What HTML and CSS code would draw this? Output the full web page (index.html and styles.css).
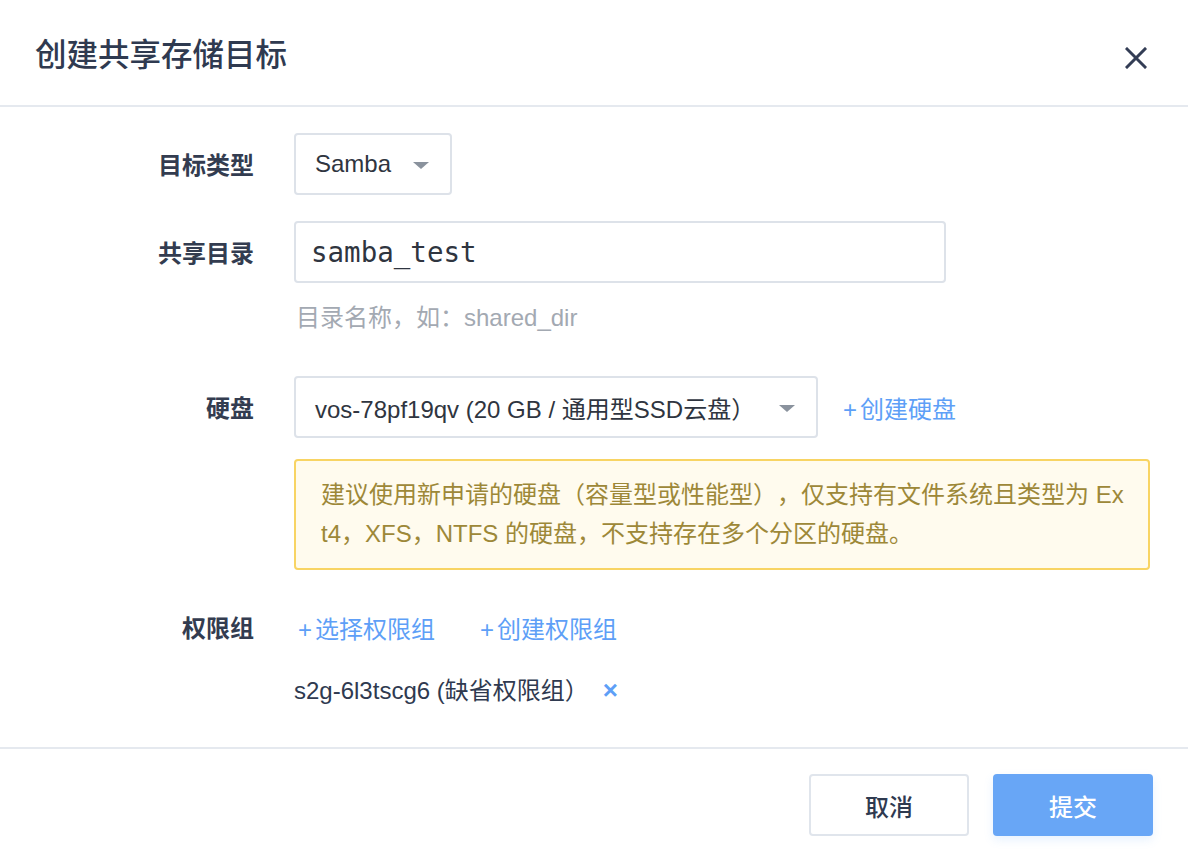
FILE: index.html
```html
<!DOCTYPE html>
<html lang="zh-CN">
<head>
<meta charset="utf-8">
<title>创建共享存储目标</title>
<link rel="stylesheet" href="styles.css">
</head>
<body>
<div class="dialog">
  <div class="header">
    <h1 class="title">创建共享存储目标</h1>
    <button class="close" aria-label="关闭">
      <svg width="22" height="22" viewBox="0 0 22 22"><path d="M2 2L20 20M20 2L2 20" stroke="#333d55" stroke-width="3" stroke-linecap="square" fill="none"/></svg>
    </button>
  </div>
  <div class="body">
    <div class="row row-type">
      <div class="label">目标类型</div>
      <div class="field">
        <div class="select select-type"><span>Samba</span><i class="caret"></i></div>
      </div>
    </div>
    <div class="row row-dir">
      <div class="label">共享目录</div>
      <div class="field">
        <div class="input">samba_test</div>
        <div class="help">目录名称，如：shared_dir</div>
      </div>
    </div>
    <div class="row row-disk">
      <div class="label">硬盘</div>
      <div class="field">
        <div class="inline">
          <div class="select select-disk"><span>vos-78pf19qv (20 GB / 通用型SSD云盘）</span><i class="caret"></i></div>
          <a class="link"><span class="plus">+</span>创建硬盘</a>
        </div>
        <div class="warn">建议使用新申请的硬盘（容量型或性能型），仅支持有文件系统且类型为 Ex<br>t4，XFS，NTFS 的硬盘，不支持存在多个分区的硬盘。</div>
      </div>
    </div>
    <div class="row row-perm">
      <div class="label">权限组</div>
      <div class="field">
        <div class="links">
          <a class="link"><span class="plus">+</span>选择权限组</a>
          <a class="link"><span class="plus">+</span>创建权限组</a>
        </div>
        <div class="tag">s2g-6l3tscg6 (缺省权限组）<span class="tag-x">×</span></div>
      </div>
    </div>
  </div>
  <div class="footer">
    <button class="btn btn-cancel">取消</button>
    <button class="btn btn-submit">提交</button>
  </div>
</div>
</body>
</html>
```

FILE: styles.css
```css
* { box-sizing: border-box; }
html, body { margin: 0; padding: 0; background: #fff; }
body {
  font-family: "Liberation Sans", "Noto Sans CJK SC", sans-serif;
  color: #2f3a50;
  text-spacing-trim: space-all;
}
.dialog { width: 1188px; }
.header {
  height: 107px;
  border-bottom: 2px solid #e5e9ef;
  display: flex;
  align-items: center;
  justify-content: space-between;
  padding: 0 41px 0 35px;
}
.title {
  margin: 0;
  font-family: "Noto Sans CJK SC", sans-serif;
  font-size: 31.5px;
  font-weight: 500;
  color: #2f3a50;
  padding-bottom: 2px;
}
.close {
  border: 0;
  background: none;
  padding: 0;
  width: 22px;
  height: 22px;
  display: flex;
  margin-top: 10px;
}
.body { padding: 26px 38px 37px 0; }
.row {
  display: grid;
  grid-template-columns: 254px 1fr;
  column-gap: 40px;
}
.label {
  text-align: right;
  font-family: "Noto Sans CJK SC", sans-serif;
  font-size: 24px;
  font-weight: 700;
  color: #333c50;
  height: 62px;
  line-height: 62px;
}
.row-type { margin-bottom: 26px; }
.row-dir { margin-bottom: 41px; }
.row-disk { margin-bottom: 37px; }
.select {
  height: 62px;
  border: 2px solid #dde2e9;
  border-radius: 4px;
  display: flex;
  align-items: center;
  justify-content: space-between;
  padding: 0 21px 0 19px;
  font-size: 24px;
  color: #2f3540;
  background: #fff;
}
.select-type { width: 158px; }
.select-disk { width: 524px; }
.caret {
  width: 0; height: 0;
  border-left: 8px solid transparent;
  border-right: 8px solid transparent;
  border-top: 7px solid #8a929d;
  margin-top: 2px;
}
.input {
  width: 652px;
  height: 62px;
  border: 2px solid #dde2e9;
  border-radius: 4px;
  padding: 0 15px;
  font-family: "DejaVu Sans Mono", monospace;
  font-size: 27.5px;
  line-height: 58px;
  color: #2f3540;
}
.help {
  margin-top: 18px;
  font-size: 24px;
  line-height: 34px;
  color: #a3a9b2;
  padding-left: 2px;
}
.inline { display: flex; align-items: center; gap: 25px; }
.link {
  color: #5e9ff7;
  font-size: 24px;
  cursor: pointer;
}
.plus { margin-right: 3px; }
.warn {
  margin-top: 21px;
  width: 856px;
  background: #fffbee;
  border: 2px solid #f8d463;
  border-radius: 4px;
  padding: 14px 20px 15px 25px;
  font-size: 24px;
  line-height: 39px;
  color: #9d8838;
  word-break: break-all;
}
.row-perm .label { height: 40px; line-height: 40px; }
.links { display: flex; gap: 45px; height: 40px; align-items: center; padding-left: 4px; }
.tag {
  margin-top: 23px;
  height: 40px;
  line-height: 40px;
  font-size: 24px;
  color: #2f3a50;
}
.tag-x {
  color: #5e9ff7;
  font-weight: 700;
  margin-left: 14px;
  font-size: 26px;
}
.footer {
  border-top: 2px solid #e5e9ef;
  display: flex;
  justify-content: flex-end;
  gap: 24px;
  padding: 25px 35px 18px 0;
}
.btn {
  width: 160px;
  height: 62px;
  border-radius: 4px;
  font-family: "Noto Sans CJK SC", sans-serif;
  font-size: 24px;
  font-weight: 500;
}
.btn-cancel {
  background: #fff;
  border: 2px solid #e0e5ec;
  color: #2f3a50;
}
.btn-submit {
  background: #68a6f6;
  border: 0;
  color: #fff;
  box-shadow: 0 4px 10px rgba(104,166,246,0.15);
}
```
